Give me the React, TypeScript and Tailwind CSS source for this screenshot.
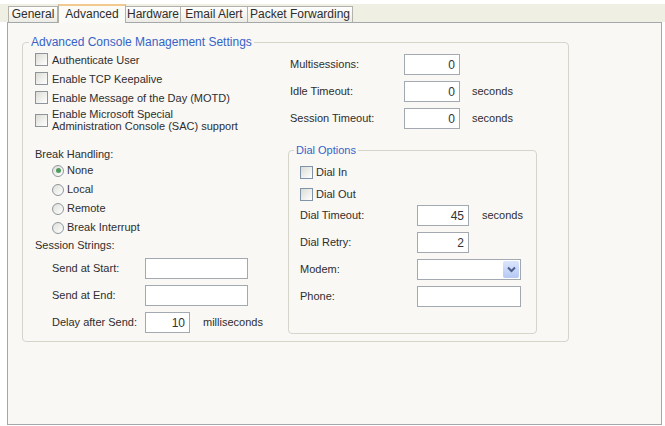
import React from "react";

const tabs = [
  { label: "General", w: "w-[50px]" },
  { label: "Advanced", w: "w-[68px]", active: true },
  { label: "Hardware", w: "w-[55px]" },
  { label: "Email Alert", w: "w-[67px]" },
  { label: "Packet Forwarding", w: "w-[105px]" },
];

function Check({ children, tall }: { children: React.ReactNode; tall?: boolean }) {
  return (
    <div className={tall ? "flex items-center h-[26px]" : "flex items-center h-[19px]"}>
      <span className="w-[13px] h-[13px] shrink-0 border border-[#8e949b] bg-gradient-to-br from-[#dcdcd6] to-white" />
      <span className="ml-[4px] leading-[12px]">{children}</span>
    </div>
  );
}

function Radio({ label, checked }: { label: string; checked?: boolean }) {
  return (
    <div className="flex items-center h-[19px]">
      <span className="w-[12px] h-[12px] shrink-0 rounded-full border border-[#8f979e] bg-gradient-to-br from-[#dedfd9] to-white flex items-center justify-center">
        {checked && <span className="w-[5px] h-[5px] rounded-full bg-[#4f9a5c]" />}
      </span>
      <span className="ml-[3px]">{label}</span>
    </div>
  );
}

function Field({ value, w }: { value?: string; w: string }) {
  return (
    <input
      readOnly
      defaultValue={value}
      className={`${w} h-[21px] border border-[#a2a9b1] bg-white text-right pr-[4px] text-[12px] text-[#333] outline-none`}
    />
  );
}

export default function App() {
  return (
    <div className="w-[665px] h-[426px] bg-white overflow-hidden font-['Liberation_Sans',Arial,sans-serif] text-[11px] text-[#2e2e2e]">
      {/* Tab strip */}
      <div className="h-[22px] border-t-[4px] border-white bg-[#efefe3] flex items-end pl-[8px] relative z-10 text-[12px]">
        {tabs.map((t) =>
          t.active ? (
            <div
              key={t.label}
              className={`${t.w} h-[19px] mb-[-1px] border-x border-[#b0b0a8] border-t-2 border-t-[#f2c98f] bg-[#fafaf7] text-center leading-[16px]`}
            >
              {t.label}
            </div>
          ) : (
            <div
              key={t.label}
              className={`${t.w} h-[16px] border-t border-r border-[#b2b2aa] first:border-l bg-gradient-to-b from-white to-[#ecebe4] text-center leading-[15px]`}
            >
              {t.label}
            </div>
          )
        )}
      </div>

      {/* Panel */}
      <div className="ml-[7px] w-[655px] h-[403px] border border-[#a3a8aa] bg-[#f9f8f5] pl-[14px] pt-[12px]">
        <fieldset className="w-[547px] min-w-0 h-[307px] border border-[#d6d5ca] rounded-[4px] p-0 m-0">
          <legend className="ml-[6px] px-[2px] text-[#3563c8] text-[12px] leading-[14px]">
            Advanced Console Management Settings
          </legend>
          <div className="flex">
            {/* Left column */}
            <div className="w-[265px] pl-[12px] pt-[1px]">
              <Check>Authenticate User</Check>
              <Check>Enable TCP Keepalive</Check>
              <Check>Enable Message of the Day (MOTD)</Check>
              <Check tall>
                Enable Microsoft Special
                <br />
                Administration Console (SAC) support
              </Check>

              <div className="mt-[14px] h-[14px] leading-[14px]">Break Handling:</div>
              <div className="pl-[17px]">
                <Radio label="None" checked />
                <Radio label="Local" />
                <Radio label="Remote" />
                <Radio label="Break Interrupt" />
              </div>

              <div className="mt-[1px] h-[14px] leading-[14px]">Session Strings:</div>
              <div className="pl-[17px] mt-[6px] flex flex-col gap-[6px]">
                <div className="flex items-center">
                  <span className="w-[93px]">Send at Start:</span>
                  <Field w="w-[103px]" />
                </div>
                <div className="flex items-center">
                  <span className="w-[93px]">Send at End:</span>
                  <Field w="w-[103px]" />
                </div>
                <div className="flex items-center">
                  <span className="w-[93px]">Delay after Send:</span>
                  <Field w="w-[45px]" value="10" />
                  <span className="ml-[13px]">milliseconds</span>
                </div>
              </div>
            </div>

            {/* Right column */}
            <div className="w-[250px]">
              <div className="pl-[2px] mt-[5px] flex flex-col gap-[6px]">
                <div className="flex items-center">
                  <span className="w-[114px]">Multisessions:</span>
                  <Field w="w-[56px]" value="0" />
                </div>
                <div className="flex items-center">
                  <span className="w-[114px]">Idle Timeout:</span>
                  <Field w="w-[56px]" value="0" />
                  <span className="ml-[12px]">seconds</span>
                </div>
                <div className="flex items-center">
                  <span className="w-[114px]">Session Timeout:</span>
                  <Field w="w-[56px]" value="0" />
                  <span className="ml-[12px]">seconds</span>
                </div>
              </div>

              <fieldset className="mt-[14px] w-[249px] min-w-0 h-[191px] border border-[#d6d5ca] rounded-[4px] p-0 m-0">
                <legend className="ml-[5px] px-[2px] text-[#3563c8] leading-[14px]">Dial Options</legend>
                <div className="pl-[11px] pt-[4px]">
                  <div className="flex items-center h-[22px]">
                    <span className="w-[13px] h-[13px] border border-[#7f94a8] bg-gradient-to-br from-[#dcdcd6] to-white" />
                    <span className="ml-[3px]">Dial In</span>
                  </div>
                  <div className="flex items-center h-[22px]">
                    <span className="w-[13px] h-[13px] border border-[#7f94a8] bg-gradient-to-br from-[#dcdcd6] to-white" />
                    <span className="ml-[3px]">Dial Out</span>
                  </div>
                  <div className="flex flex-col gap-[6px]">
                    <div className="flex items-center">
                      <span className="w-[117px]">Dial Timeout:</span>
                      <Field w="w-[52px]" value="45" />
                      <span className="ml-[13px]">seconds</span>
                    </div>
                    <div className="flex items-center">
                      <span className="w-[117px]">Dial Retry:</span>
                      <Field w="w-[52px]" value="2" />
                    </div>
                    <div className="flex items-center">
                      <span className="w-[117px]">Modem:</span>
                      <div className="w-[104px] h-[21px] border border-[#a2a9b1] bg-white flex justify-end p-[1px]">
                        <div className="w-[16px] h-full rounded-[2px] bg-gradient-to-b from-[#dbe6fc] to-[#b6c9f4] flex items-center justify-center">
                          <svg width="9" height="7" viewBox="0 0 9 7">
                            <path d="M1 1.5 L4.5 5 L8 1.5" fill="none" stroke="#4d5f8a" strokeWidth="2" />
                          </svg>
                        </div>
                      </div>
                    </div>
                    <div className="flex items-center">
                      <span className="w-[117px]">Phone:</span>
                      <Field w="w-[104px]" />
                    </div>
                  </div>
                </div>
              </fieldset>
            </div>
          </div>
        </fieldset>
      </div>
    </div>
  );
}
